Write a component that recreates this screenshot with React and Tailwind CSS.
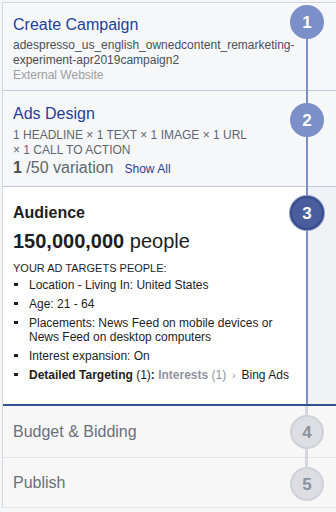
const targets = [
    "Location - Living In: United States",
    "Age: 21 - 64",
    "Placements: News Feed on mobile devices or News Feed on desktop computers",
    "Interest expansion: On",
];

const steps = [
    { n: 1, top: "top-[2px]", tone: "done" },
    { n: 2, top: "top-[100px]", tone: "done" },
    { n: 3, top: "top-[193px]", tone: "active" },
    { n: 4, top: "top-[412px]", tone: "todo" },
    { n: 5, top: "top-[464px]", tone: "todo" },
];

function StepDot({ n, top, tone }) {
    const look =
        tone === "active"
            ? "bg-[#4a5e9e] border-[#384c8a] text-white shadow-[0_0_0_1px_#8c9bcf]"
            : tone === "done"
              ? "bg-[#7b8fc8] border-[#7b8fc8] text-white"
              : "bg-[#dcdee3] border-[#cfd2d8] text-[#8d939c]";

    return (
        <div
            className={`absolute left-[287px] ${top} flex h-[34px] w-[34px] items-center justify-center rounded-full border-2 text-[17px] font-bold leading-none ${look}`}
        >
            {n}
        </div>
    );
}

export default function App() {
    return (
        <div className="min-h-[512px] w-[336px] bg-[#f5f6f7] pl-[2px] pt-[2px] font-['Liberation_Sans',Arial,sans-serif]">
            <div className="relative border-l border-t border-[#d3d7df]">
                {/* step 1 */}
                <section className="h-[88px] border-b border-[#c3c9dc] bg-[#f6f7f9] pl-[10px] pt-[12px]">
                    <p className="text-[16px] leading-[20px] text-[#1f3f99]">Create Campaign</p>
                    <p className="mt-[2.5px] text-[12px] leading-[15px] text-[#4b4f56]">
                        adespresso_us_english_ownedcontent_remarketing-
                        <br />
                        experiment-apr2019campaign2
                    </p>
                    <p className="text-[12px] leading-[15px] text-[#9a9ea6]">External Website</p>
                </section>

                {/* step 2 */}
                <section className="h-[96px] border-b border-[#c3c9dc] bg-[#f6f7f9] pl-[10px] pt-[13px]">
                    <p className="text-[16px] leading-[20px] text-[#1f3f99]">Ads Design</p>
                    <p className="mt-[3.5px] text-[12px] leading-[15px] text-[#606770]">
                        1 HEADLINE × 1 TEXT × 1 IMAGE × 1 URL
                        <br />× 1 CALL TO ACTION
                    </p>
                    <p className="flex items-baseline text-[16px] leading-[20px] text-[#606770]">
                        <span className="font-bold text-[#4b4f56]">1</span>
                        <span>&nbsp;/50 variation</span>
                        <span className="ml-[11px] text-[12px] text-[#1f3f99]">Show All</span>
                    </p>
                </section>

                {/* step 3 */}
                <section className="flex h-[219px] border-b-2 border-[#33508f] bg-[#f1f2f5]">
                    <div className="w-[304px] bg-white pl-[10px] pt-[16px] text-[#1c1e21]">
                        <p className="text-[16px] font-bold leading-[20px]">Audience</p>
                        <p className="mt-[6px] text-[20px] leading-[24px]">
                            <span className="font-bold">150,000,000</span> people
                        </p>
                        <p className="mt-[7.5px] text-[11px] leading-[14px]">YOUR AD TARGETS PEOPLE:</p>
                        <ul className="mt-[3.5px] flex flex-col gap-[5px] pr-[24px] text-[12px] leading-[14px]">
                            {targets.map((t) => (
                                <li key={t} className="flex">
                                    <span className="mt-[5px] mr-[11px] ml-[1px] h-[3px] w-[4px] shrink-0 bg-[#1c1e21]" />
                                    <span>{t}</span>
                                </li>
                            ))}
                            <li className="flex whitespace-nowrap">
                                <span className="mt-[5px] mr-[11px] ml-[1px] h-[3px] w-[4px] shrink-0 bg-[#1c1e21]" />
                                <span>
                                    <b>Detailed Targeting</b> (1)<b>:</b>{" "}
                                    <b className="text-[#90949c]">Interests</b>
                                    <span className="text-[#90949c]"> (1)</span>
                                    <span className="mx-[6px] text-[10px] text-[#90949c]">›</span>
                                    Bing Ads
                                </span>
                            </li>
                        </ul>
                    </div>
                </section>

                {/* step 4 */}
                <section className="flex h-[52px] items-center border-b border-[#e3e5e9] bg-[#f7f7f8] pl-[10px]">
                    <p className="text-[16px] leading-[20px] text-[#6b7079]">Budget &amp; Bidding</p>
                </section>

                {/* step 5 */}
                <section className="flex h-[50px] items-center border-b border-[#e3e5e9] bg-[#f7f7f8] pl-[10px]">
                    <p className="text-[16px] leading-[20px] text-[#6b7079]">Publish</p>
                </section>

                {/* timeline */}
                <div className="absolute left-[303px] top-[18px] h-[383px] w-[2px] bg-[#7b8fc8]" />
                <div className="absolute left-[302px] top-[403px] h-[78px] w-[3px] bg-[#d3d6dc]" />
                {steps.map((s) => (
                    <StepDot key={s.n} {...s} />
                ))}
            </div>
        </div>
    );
}
